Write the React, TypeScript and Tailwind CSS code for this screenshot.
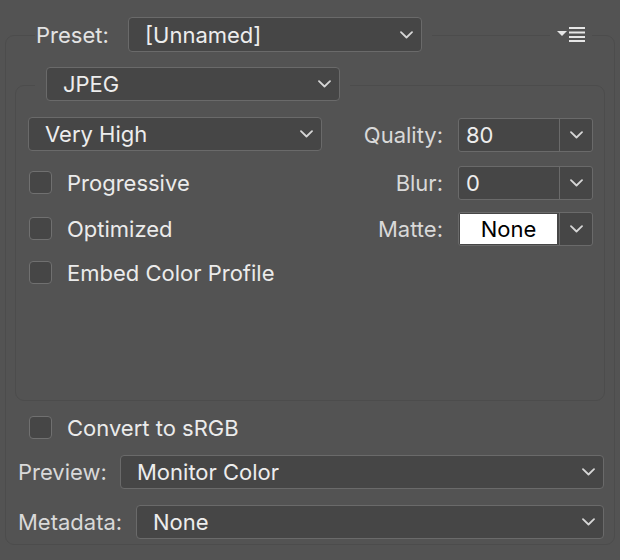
import React from "react";

function Chevron({ className = "" }: { className?: string }) {
  return (
    <svg width="13" height="8" viewBox="0 0 13 8" className={className}>
      <path d="M1 1.2 L6.5 6.5 L12 1.2" fill="none" stroke="#d6d6d6" strokeWidth="1.8" strokeLinecap="round" strokeLinejoin="round" />
    </svg>
  );
}

function Dropdown({ text, className = "" }: { text: string; className?: string }) {
  return (
    <div className={`flex items-center border border-[#6a6a6a] bg-[#464646] rounded-[4px] pl-[16px] pr-[8px] ${className}`}>
      <span className="flex-1 text-[#ededed] leading-none">{text}</span>
      <Chevron />
    </div>
  );
}

function Checkbox({ label, className = "" }: { label: string; className?: string }) {
  return (
    <div className={`flex items-center ${className}`}>
      <div className="w-[23px] h-[23px] rounded-[4px] border border-[#707070] bg-[#464646]" />
      <span className="ml-[15px] text-[#ebebeb] leading-none">{label}</span>
    </div>
  );
}

function NumField({ label, value, white = false, className = "" }: { label: string; value: string; white?: boolean; className?: string }) {
  return (
    <div className={`flex items-center justify-end ${className}`}>
      <span className="text-[#d9d9d9] leading-none">{label}</span>
      <div className="ml-[15px] w-[135px] h-[34px] flex border border-[#6a6a6a] bg-[#464646] rounded-[3px]">
        {white ? (
          <div className="flex-1 p-[1px] pr-[2px]">
            <div className="h-full bg-white flex items-center justify-center text-black leading-none">{value}</div>
          </div>
        ) : (
          <div className="flex-1 flex items-center pl-[7px] text-[#ededed] leading-none">{value}</div>
        )}
        <div className="w-[33px] border-l border-[#6a6a6a] flex items-center justify-center">
          <Chevron />
        </div>
      </div>
    </div>
  );
}

function MenuIcon() {
  return (
    <svg width="28" height="16" viewBox="0 0 28 16">
      <path d="M0 4 L10 4 L5 9 Z" fill="#e6e6e6" />
      <rect x="12" y="0" width="16" height="2" fill="#e6e6e6" />
      <rect x="12" y="4.5" width="16" height="2" fill="#e6e6e6" />
      <rect x="12" y="9" width="16" height="2" fill="#e6e6e6" />
      <rect x="12" y="13" width="16" height="2" fill="#e6e6e6" />
    </svg>
  );
}

export default function App() {
  return (
    <div className="w-[620px] h-[560px] bg-[#535353] pt-[35px] px-[5px] font-['Inter',sans-serif] text-[22px] overflow-hidden">
      <div className="h-[510px] border border-[#4c4c4c] rounded-[9px] px-[9px] flex flex-col">
        {/* Preset row */}
        <div className="-mt-[19px] h-[35px] flex items-center">
          <div className="ml-[20px] pl-[1px] pr-[10px] bg-[#535353] flex items-center">
            <span className="w-[92px] text-[#e3e3e3] leading-none">Preset:</span>
            <Dropdown text="[Unnamed]" className="w-[294px] h-[35px]" />
          </div>
          <div className="flex-1" />
          <div className="mr-[13px] px-[7px] bg-[#535353] flex items-center h-[20px]">
            <MenuIcon />
          </div>
        </div>

        {/* Inner panel */}
        <div className="mt-[33px] h-[316px] border border-[#4c4c4c] rounded-[9px] flex flex-col">
          <div className="-mt-[19px] flex">
            <div className="ml-[19px] pl-[11px] pr-[10px] bg-[#535353]">
              <Dropdown text="JPEG" className="w-[294px] h-[34px]" />
            </div>
          </div>
          <div className="mt-[16px] flex">
            <div className="ml-[12px] flex flex-col">
              <Dropdown text="Very High" className="w-[294px] h-[34px]" />
              <Checkbox label="Progressive" className="mt-[20px] ml-[1px]" />
              <Checkbox label="Optimized" className="mt-[23px] ml-[1px]" />
              <Checkbox label="Embed Color Profile" className="mt-[21px] ml-[1px]" />
            </div>
            <div className="ml-auto mr-[11px] flex flex-col">
              <NumField label="Quality:" value="80" className="mt-[1px]" />
              <NumField label="Blur:" value="0" className="mt-[14px]" />
              <NumField label="Matte:" value="None" white className="mt-[12px]" />
            </div>
          </div>
        </div>

        <Checkbox label="Convert to sRGB" className="mt-[15px] ml-[14px]" />

        <div className="mt-[16px] flex items-center mr-[1px]">
          <span className="ml-[3px] w-[102px] text-[#d9d9d9] leading-none">Preview:</span>
          <Dropdown text="Monitor Color" className="flex-1 h-[34px]" />
        </div>
        <div className="mt-[16px] flex items-center mr-[1px]">
          <span className="ml-[3px] w-[118px] text-[#d9d9d9] leading-none">Metadata:</span>
          <Dropdown text="None" className="flex-1 h-[34px]" />
        </div>
      </div>
    </div>
  );
}
